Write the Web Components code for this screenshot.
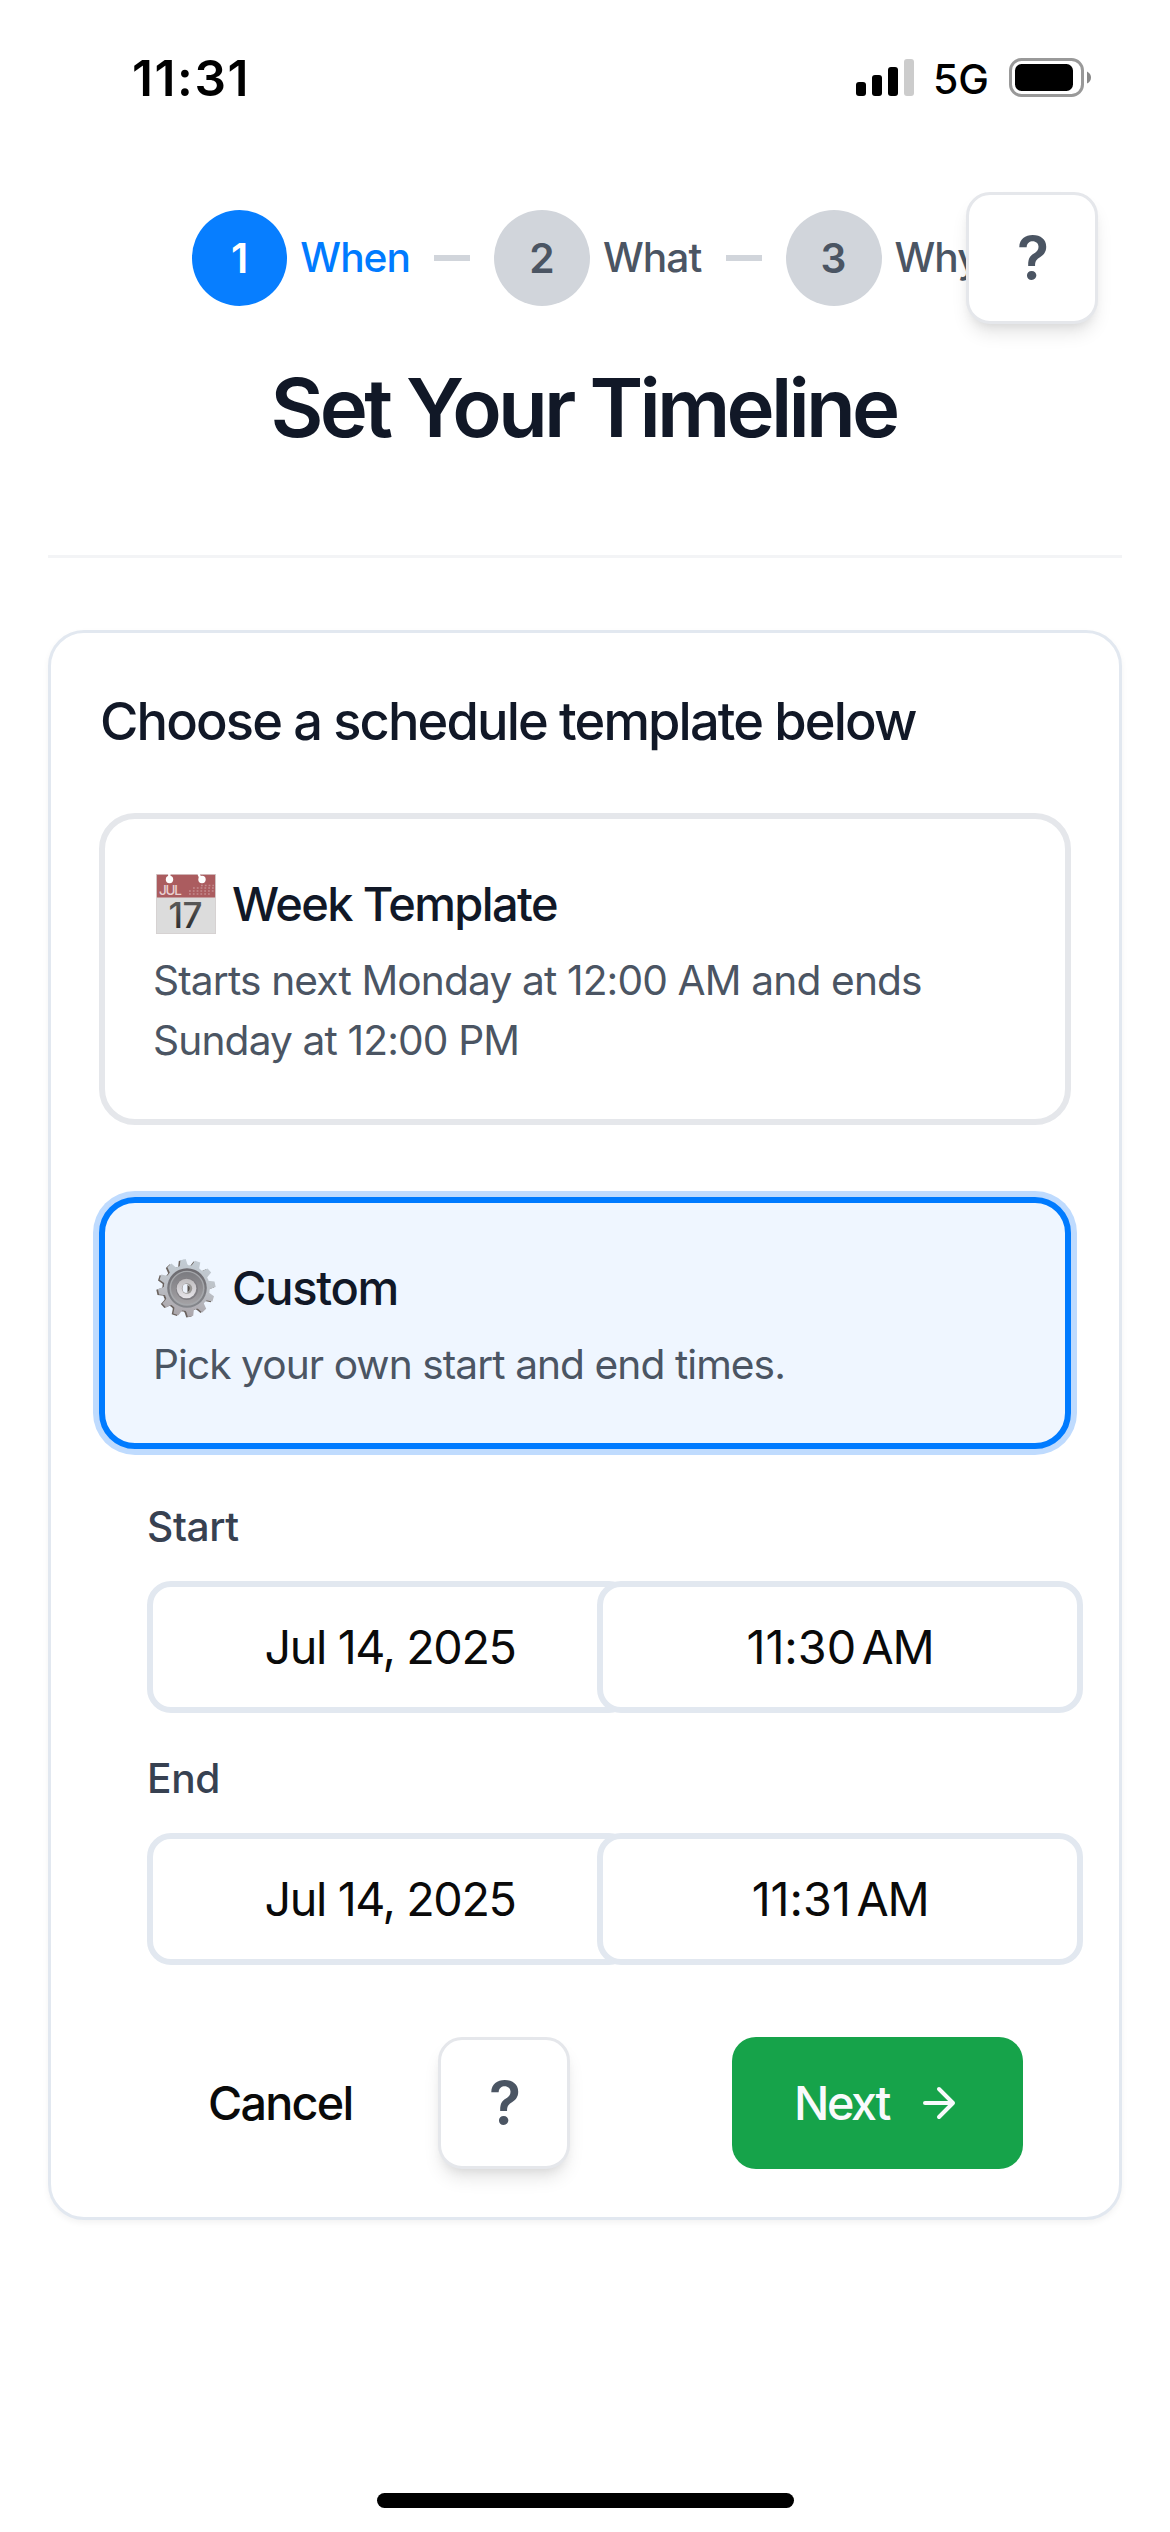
<!DOCTYPE html>
<html lang="en">
<head>
<meta charset="utf-8">
<title>Set Your Timeline</title>
<style>
  html, body { margin: 0; padding: 0; background: #fff; }
  body { width: 1170px; height: 2532px; overflow: hidden; font-family: Inter, "Liberation Sans", sans-serif; color: #0a0a0a; }
</style>
</head>
<body>
<timeline-page></timeline-page>
<script>
const define = (name, markup, setup) => {
  const template = document.createElement('template');
  template.innerHTML = markup;
  customElements.define(name, class extends HTMLElement {
    connectedCallback() {
      if (this.shadowRoot) return;
      const root = this.attachShadow({ mode: 'open' });
      root.append(template.content.cloneNode(true));
      if (setup) setup(this, root);
    }
  });
};

define('status-bar', `
<style>
  :host { display: flex; align-items: center; height: 156px; padding: 0 79px 0 132px; box-sizing: border-box; color: #000; }
  .time { font-size: 49.5px; font-weight: 600; letter-spacing: 1.6px; line-height: 60px; }
  .right { display: flex; align-items: center; margin-left: auto; height: 40px; }
  .net { font-size: 41px; font-weight: 500; line-height: 40px; width: 56px; margin: 2px 20px 0 19px; }
  svg { display: block; }
</style>
<span class="time">11:31</span>
<div class="right">
  <svg width="58" height="40" viewBox="0 0 58 40">
    <rect x="0" y="24" width="10" height="14" rx="3"/>
    <rect x="16" y="17" width="10" height="21" rx="3"/>
    <rect x="32" y="9" width="10" height="29" rx="3"/>
    <rect x="48" y="1" width="10" height="37" rx="3" fill="#ccc"/>
  </svg>
  <span class="net">5G</span>
  <svg width="82" height="40" viewBox="0 0 82 40">
    <rect x="1.5" y="1.5" width="72" height="36" rx="11" fill="none" stroke="#999" stroke-width="3"/>
    <rect x="6" y="6" width="58" height="27" rx="6.5"/>
    <path d="M78 13.500Q82 15.500 82 19.500T78 25.500Z" fill="#888"/>
  </svg>
</div>`);

define('step-item', `
<style>
  :host { display: flex; align-items: center; flex: none; color: #4b5563; }
  .dot { width: 96px; height: 96px; border-radius: 50%; background: #d1d5db; display: flex; align-items: center; justify-content: center; font-size: 40.7px; font-weight: 600; margin-right: 12px; }
  .label { font-size: 40.7px; font-weight: 500; line-height: 60px; letter-spacing: -1px; white-space: nowrap; padding-left: 1px; }
  :host([active]) { color: #007bff; }
  :host([active]) .dot { background: #077eff; color: #fff; }
</style>
<span class="dot"></span><span class="label"><slot></slot></span>`,
(el, root) => { root.querySelector('.dot').textContent = el.getAttribute('number'); });

define('help-button', `
<style>
  :host { display: flex; align-items: center; justify-content: center; box-sizing: border-box; width: 132px; height: 132px; flex: none;
    background: #fff; border: 3px solid #e5e7eb; border-radius: 24px; color: #4b5563; font-size: 59px; font-weight: 600; line-height: 72px;
    box-shadow: 0 12px 18px -3px rgba(0,0,0,.1), 0 6px 12px -6px rgba(0,0,0,.1); }
  span { padding-left: 2px; }
</style>
<span>?</span>`);

define('wizard-header', `
<style>
  :host { display: block; position: relative; padding: 54px 0 105px; margin: 0 48px; border-bottom: 3px solid #f3f4f6; }
  nav { display: flex; align-items: center; gap: 24px; margin-left: 144px; }
  i { width: 36px; height: 6px; background: #d1d5db; flex: none; }
  h1 { margin: 60px 0 0; padding-right: 3px; text-align: center; font-size: 81.5px; font-weight: 600; line-height: 84px; letter-spacing: -3.8px; color: #111827; }
  /* The help button floats over the end of the step list. */
  help-button { position: absolute; top: 36px; right: 24px; }
</style>
<nav>
  <step-item number="1" active style="width:218px">When</step-item><i></i>
  <step-item number="2" style="width:207.5px">What</step-item><i></i>
  <step-item number="3">Why</step-item>
</nav>
<h1>Set Your Timeline</h1>
<help-button></help-button>`);

define('calendar-icon', `
<style>:host { display: block; width: 60px; height: 60px; } svg { display: block; overflow: visible; }</style>
<svg width="60" height="60" viewBox="0 0 60 60">
  <defs>
    <linearGradient id="ink" x1="0" y1="0" x2="0" y2="1"><stop offset="0" stop-color="#666"/><stop offset="1" stop-color="#222"/></linearGradient>
  </defs>
  <rect width="60" height="60" fill="#dcdcdc"/>
  <rect x=".5" y=".5" width="59" height="23" fill="#ab5c5f"/>
  <path d="M0 .5H60" stroke="#d0b4b5"/>
  <path d="M13.300 0V5M42.500 0L45 5" stroke="#fff" stroke-width="2.400"/>
  <circle cx="13.500" cy="5.500" r="3.700" fill="#fff"/><circle cx="46" cy="5.500" r="3.700" fill="#fff"/>
  <g stroke="#d9b3b5" stroke-width="1.600" stroke-dasharray="1.800 2" opacity=".55">
    <path d="M45 11.500H58M37 14H58M33 17H58M33 20H54"/>
  </g>
  <text x="3" y="20.500" font-family="Inter,sans-serif" font-size="13.500" textLength="23" fill="#e8d0d1">JUL</text>
  <text x="12.500" y="53.700" font-family="Inter,sans-serif" font-size="35" font-weight="500" textLength="34" fill="url(#ink)">17</text>
  <path d="M.5 0V60M59.500 0V60M0 59.500H60" stroke="#d4cfcf" stroke-opacity=".8"/>
</svg>`);

define('gear-icon', `
<style>:host { display: block; width: 60px; height: 60px; } svg { display: block; overflow: visible; }</style>
<svg width="60" height="60" viewBox="0 0 60 60">
  <defs>
    <linearGradient id="metal" gradientUnits="userSpaceOnUse" x1="36" y1="0" x2="26" y2="60"><stop offset="0" stop-color="#c3cdd5"/><stop offset=".5" stop-color="#bcc0c6"/><stop offset="1" stop-color="#a9a3a8"/></linearGradient>
    <linearGradient id="well" x1="0" y1="0" x2="0" y2="1"><stop offset="0" stop-color="#6c6a6f"/><stop offset="1" stop-color="#85878c"/></linearGradient>
    <linearGradient id="floor" x1="0" y1="0" x2="0" y2="1"><stop offset="0" stop-color="#7b7b80"/><stop offset="1" stop-color="#a3a1a4"/></linearGradient>
    <linearGradient id="hub" x1="0" y1="0" x2="0" y2="1"><stop offset="0" stop-color="#bdbbbd"/><stop offset=".6" stop-color="#d6d4d8"/><stop offset="1" stop-color="#e6e4e8"/></linearGradient>
  </defs>
  <g class="back" fill="#6a625e"></g>
  <g class="front" fill="url(#metal)"></g>
  <circle cx="31" cy="30" r="19.800" fill="url(#well)"/>
  <circle cx="31" cy="30.300" r="17.500" fill="#a5a7ab"/>
  <circle cx="31" cy="30" r="16" fill="url(#floor)"/>
  <circle cx="31" cy="31" r="11" fill="#807e83"/>
  <circle cx="30.500" cy="30.500" r="9.800" fill="url(#hub)"/>
  <circle cx="31" cy="30.500" r="5.200" fill="#9a9896"/>
  <ellipse cx="30" cy="30.500" rx="3.400" ry="4.400" fill="#edf3fc"/>
  <path d="M31.500 26.500Q36 30.500 31.500 34.500Z" fill="#57504b"/>
</svg>`,
(el, root) => {
  const teeth = (dx, dy) => {
    let d = '';
    for (let i = 0; i < 12; i++) {
      const a = (-97 + i * 30) * Math.PI / 180, c = Math.cos(a), s = Math.sin(a);
      const p = [[20, -5], [24, -4], [28.300, -3], [28.800, 2.400], [24, 3.400], [20, 5]]
        .map(([r, t]) => `${(30.800 + dx + r * c - t * s).toFixed(1)} ${(30 + dy + r * s + t * c).toFixed(1)}`);
      d += `M${p.join('L')}Z`;
    }
    return `<circle cx="${30.800 + dx}" cy="${30 + dy}" r="23"/><path d="${d}"/>`;
  };
  root.querySelector('.back').innerHTML = teeth(-1.6, .7);
  root.querySelector('.front').innerHTML = teeth(0, 0);
});

define('template-option', `
<style>
  :host { display: block; box-sizing: border-box; padding: 48px; border: 6px solid #e5e7eb; border-radius: 36px; background: #fff; }
  :host([selected]) { border-color: #007bff; background: #eff6ff; box-shadow: 0 0 0 6px #bfdbfe; }
  .title { display: flex; align-items: center; gap: 16px; height: 72px; box-sizing: border-box; padding: 2px 0 0 3px; font-size: 47px; font-weight: 500; line-height: 70px; color: #111827; }
  .desc { margin-top: 12px; font-size: 40.7px; line-height: 60px; letter-spacing: -.87px; color: #4b5563; }
  :host([selected]) .desc { letter-spacing: -.95px; }
</style>
<div class="title"><slot name="icon"></slot><slot name="title"></slot></div>
<div class="desc"><slot></slot></div>`);

define('date-time-field', `
<style>
  :host { display: block; }
  .label { font-size: 40.7px; font-weight: 500; line-height: 60px; letter-spacing: -.4px; color: #374151; margin-bottom: 24px; }
  .row { display: flex; }
  .box { flex: none; width: 486px; height: 132px; box-sizing: border-box; border: 6px solid #e2e8f0; border-radius: 24px; background: #fff;
    display: flex; align-items: center; justify-content: center; font-size: 46.7px; line-height: 60px; color: #0a0a0a; white-space: nowrap; }
  .date { letter-spacing: -1.39px; }
  .time { margin-left: -36px; letter-spacing: -1.2px; }
  .time span { display: inline-block; margin-left: -3px; }
</style>
<div class="label"></div>
<div class="row"><div class="box date"></div><div class="box time"></div></div>`,
(el, root) => {
  root.querySelector('.label').textContent = el.getAttribute('label');
  root.querySelector('.date').textContent = el.getAttribute('date');
  const [clock, half] = el.getAttribute('time').split('\u202f');
  root.querySelector('.time').innerHTML = `<div>${clock}\u202f<span>${half}</span></div>`;
});

define('form-actions', `
<style>
  :host { display: flex; align-items: center; height: 132px; padding: 0 48px 0 109px; }
  .cancel { width: 230px; font-size: 46.7px; font-weight: 500; line-height: 72px; letter-spacing: -1.74px; color: #0a0a0a; }
  .next { margin-left: auto; width: 291px; height: 132px; box-sizing: border-box; padding: 0 60px 0 62px; border-radius: 24px; background: #16a34a; color: #f8fafc;
    display: flex; align-items: center; justify-content: space-between; font-size: 46.7px; font-weight: 500; line-height: 72px; letter-spacing: -2.35px; }
</style>
<span class="cancel">Cancel</span>
<help-button></help-button>
<span class="next"><span>Next</span>
  <svg width="48" height="48" viewBox="0 0 24 24" fill="none" stroke="currentColor" stroke-width="2" stroke-linecap="round" stroke-linejoin="round"><path d="M5 12h14M12 5l7 7-7 7"/></svg>
</span>`);

define('schedule-card', `
<style>
  :host { display: block; box-sizing: border-box; margin: 72px 48px 0; height: 1590px; padding: 48px; border: 3px solid #e2e8f0; border-radius: 36px; background: #fff; box-shadow: 0 3px 6px rgba(0,0,0,.05); }
  h2 { margin: 0 0 51px; font-size: 52.4px; font-weight: 500; line-height: 81px; letter-spacing: -1.86px; color: #111827; padding-left: 1px; white-space: nowrap; }
  .options { display: flex; flex-direction: column; gap: 72px; }
  .fields { display: flex; flex-direction: column; gap: 36px; padding: 48px 0 72px 48px; }
</style>
<h2>Choose a schedule template below</h2>
<div class="options">
  <template-option><calendar-icon slot="icon"></calendar-icon><span slot="title" style="letter-spacing:-1.61px">Week Template</span>Starts next Monday at 12:00 AM and ends Sunday at 12:00 PM</template-option>
  <template-option selected><gear-icon slot="icon"></gear-icon><span slot="title" style="letter-spacing:-1.3px">Custom</span>Pick your own start and end times.</template-option>
</div>
<div class="fields">
  <date-time-field label="Start" date="Jul 14, 2025" time="11:30&#8239;AM"></date-time-field>
  <date-time-field label="End" date="Jul 14, 2025" time="11:31&#8239;AM"></date-time-field>
</div>
<form-actions></form-actions>`);

define('home-indicator', `
<style>:host { display: block; width: 417px; height: 15px; border-radius: 8px; background: #000; margin: auto auto 24px; }</style>`);

define('timeline-page', `
<style>:host { display: flex; flex-direction: column; width: 1170px; height: 2532px; background: #fff; }</style>
<status-bar></status-bar>
<wizard-header></wizard-header>
<schedule-card></schedule-card>
<home-indicator></home-indicator>`);
</script>
</body>
</html>
